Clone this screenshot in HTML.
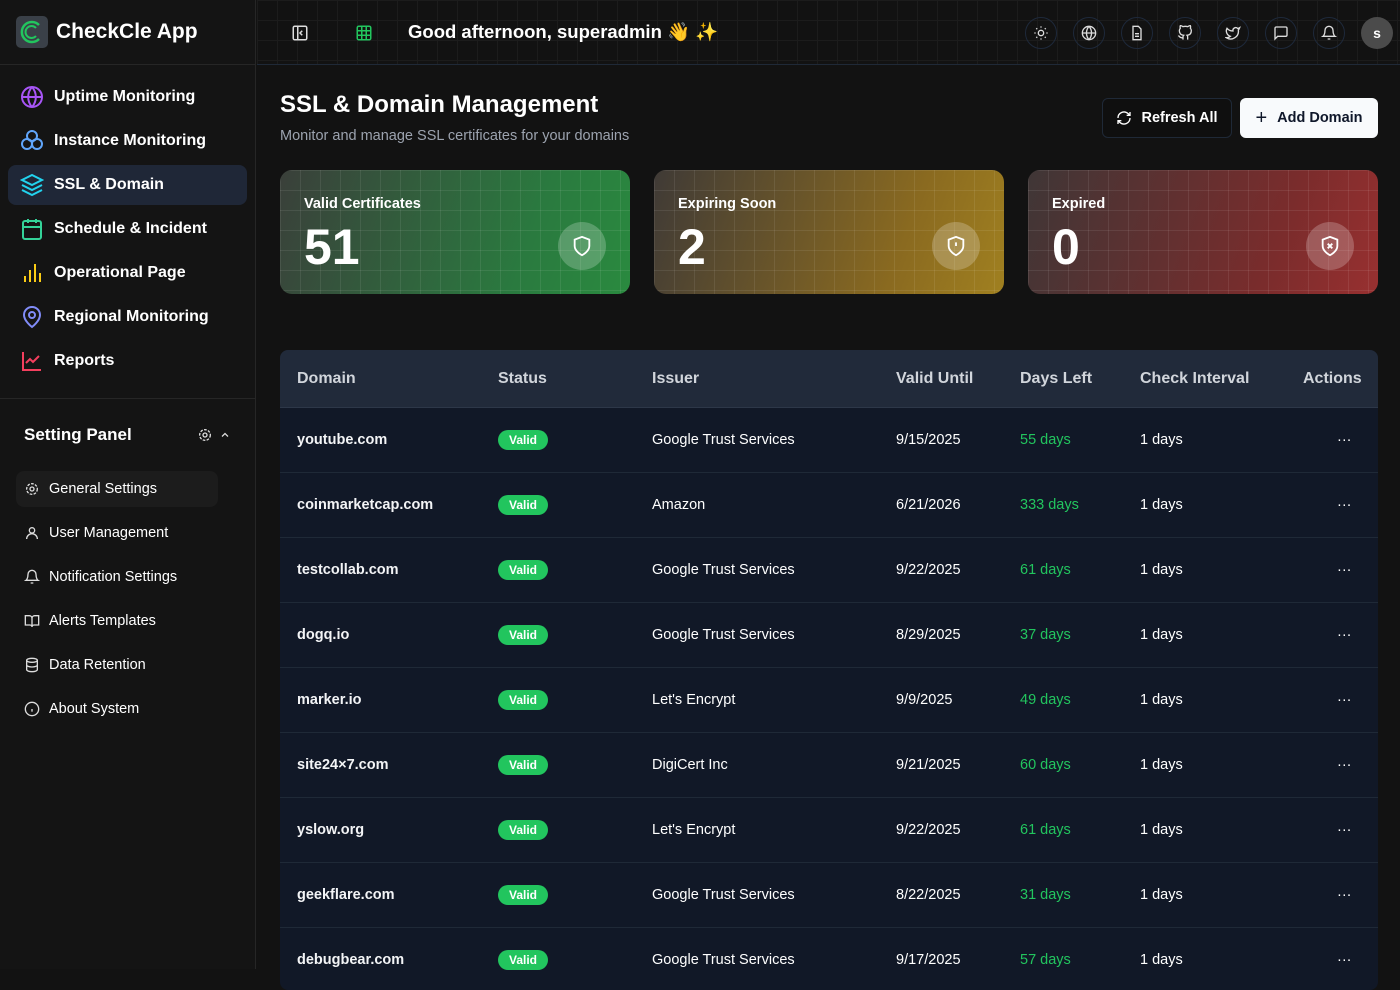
<!DOCTYPE html>
<html><head><meta charset="utf-8"><style>
*{box-sizing:border-box;margin:0;padding:0}
body{width:1400px;height:969px;overflow:hidden;background:#121212;font-family:"Liberation Sans",sans-serif;color:#fff;position:relative}
.sb{position:absolute;left:0;top:0;width:256px;height:969px;background:#141414;border-right:1px solid #262626}
.logo{height:65px;border-bottom:1px solid #262626;display:flex;align-items:center;padding-left:16px}
.logo .ic{width:32px;height:32px;background:#3a4048;border-radius:5px;display:flex;align-items:center;justify-content:center}
.logo span{font-size:21px;font-weight:bold;margin-left:8px}
.nav{padding:12px 8px 13px}
.ni{height:40px;display:flex;align-items:center;padding-left:12px;margin-bottom:4px;border-radius:8px;font-size:16px;font-weight:bold}
.ni svg{margin-right:10px}
.ni.act{background:#1f2737}
.sep{border-top:1px solid #262626}
.sp{display:flex;align-items:center;padding:0 24px;height:72px;font-size:17px;font-weight:bold}
.si{height:36px;display:flex;align-items:center;padding-left:8px;margin:0 37px 8px 16px;border-radius:8px;font-size:14.5px}
.si svg{margin-right:9px}
.si.act{background:#1c1c1c}
.hdr{position:absolute;left:257px;top:0;right:0;height:65px;border-bottom:1px solid #1f2937;background-color:#121212;background-image:linear-gradient(#1c1c1c 1px,transparent 1px),linear-gradient(90deg,#1c1c1c 1px,transparent 1px);background-size:20px 20px}
.rb{position:absolute;top:17px;width:32px;height:32px;border-radius:50%;border:1px solid #1e293b;display:flex;align-items:center;justify-content:center}
h1{position:absolute;left:280px;top:91px;font-size:24px;font-weight:bold}
.sub{position:absolute;left:280px;top:128px;font-size:14.5px;color:#9ca3af}
.btn{position:absolute;top:98px;height:40px;border-radius:6px;display:flex;align-items:center;justify-content:center;font-size:14.5px;font-weight:bold}
.card{position:absolute;top:170px;width:350px;height:124px;border-radius:12px;overflow:hidden}
.card .g{position:absolute;inset:0;background-image:linear-gradient(rgba(255,255,255,.08) 1px,transparent 1px),linear-gradient(90deg,rgba(255,255,255,.08) 1px,transparent 1px);background-size:20px 20px}
.card .t{position:absolute;left:24px;top:26px;font-size:14.5px;font-weight:bold}
.card .n{position:absolute;left:24px;top:48px;font-size:50px;font-weight:bold}
.card .c{position:absolute;left:278px;top:52px;width:48px;height:48px;border-radius:50%;background:rgba(255,255,255,.22);display:flex;align-items:center;justify-content:center}
.tbl{position:absolute;left:280px;top:350px;width:1098px;height:640px;border-radius:8px;overflow:hidden;background:#111827}
.th{height:58px;background:#212a3a;border-bottom:1px solid #2d3748;position:relative;font-size:16px;font-weight:bold;color:#d1d5db}
.tr{height:65px;border-bottom:1px solid #1f2937;position:relative;font-size:14.5px}
.th div,.tr div{position:absolute;top:50%;transform:translateY(-50%)}
.tr div:first-child{font-weight:bold;color:#f3f4f6}
.badge{background:#22c55e;color:#fff;font-size:12px;font-weight:bold;padding:3px 11px;border-radius:11px}
.dl{color:#22c55e}
</style></head><body>
<div class="sb">
 <div class="logo"><div class="ic"><svg width="26" height="26" viewBox="0 0 26 26"><path d="M20 6A10 10 0 1 0 20 20" fill="none" stroke="#22c55e" stroke-width="2.5"/><path d="M17 9A6 6 0 1 0 17 17" fill="none" stroke="#22c55e" stroke-width="2"/></svg></div><span>CheckCle App</span></div>
 <div class="nav">
  <div class="ni"><svg width="24" height="24" viewBox="0 0 24 24" fill="none" stroke="#a855f7" stroke-width="2"><circle cx="12" cy="12" r="10"/><path d="M2 12h20M12 2a15 15 0 0 1 0 20M12 2a15 15 0 0 0 0 20"/></svg>Uptime Monitoring</div>
  <div class="ni"><svg width="24" height="24" viewBox="0 0 24 24" fill="none" stroke="#60a5fa" stroke-width="2"><circle cx="12" cy="7" r="5"/><circle cx="7" cy="15" r="5"/><circle cx="17" cy="15" r="5"/></svg>Instance Monitoring</div>
  <div class="ni act"><svg width="24" height="24" viewBox="0 0 24 24" fill="none" stroke="#22d3ee" stroke-width="2"><path d="M12 2 2 7l10 5 10-5z"/><path d="m2 12 10 5 10-5M2 17l10 5 10-5"/></svg>SSL &amp; Domain</div>
  <div class="ni"><svg width="24" height="24" viewBox="0 0 24 24" fill="none" stroke="#34d399" stroke-width="2"><rect x="3" y="4" width="18" height="18" rx="2"/><path d="M16 2v4M8 2v4M3 10h18"/></svg>Schedule &amp; Incident</div>
  <div class="ni"><svg width="24" height="24" viewBox="0 0 24 24" fill="none" stroke="#facc15" stroke-width="2"><path d="M5 21v-6M10 21V9M15 21V3M20 21v-9"/></svg>Operational Page</div>
  <div class="ni"><svg width="24" height="24" viewBox="0 0 24 24" fill="none" stroke="#818cf8" stroke-width="2"><path d="M20 10c0 6-8 12-8 12s-8-6-8-12a8 8 0 0 1 16 0z"/><circle cx="12" cy="10" r="3"/></svg>Regional Monitoring</div>
  <div class="ni"><svg width="24" height="24" viewBox="0 0 24 24" fill="none" stroke="#f43f5e" stroke-width="2"><path d="M3 3v18h18"/><path d="m6 14 4-4 3 3 6-6"/></svg>Reports</div>
 </div>
 <div class="sep"></div>
 <div class="sp"><span style="flex:1">Setting Panel</span><svg width="16" height="16" viewBox="0 0 24 24" fill="none" stroke="#ddd" stroke-width="2"><circle cx="12" cy="12" r="3"/><circle cx="12" cy="12" r="8" stroke-dasharray="4 2"/></svg><svg style="margin-left:6px" width="12" height="12" viewBox="0 0 24 24" fill="none" stroke="#ddd" stroke-width="2.5"><path d="m6 15 6-6 6 6"/></svg></div>
 <div class="si act"><svg width="16" height="16" viewBox="0 0 24 24" fill="none" stroke="#ddd" stroke-width="2"><circle cx="12" cy="12" r="3"/><circle cx="12" cy="12" r="8" stroke-dasharray="4 2"/></svg>General Settings</div>
 <div class="si"><svg width="16" height="16" viewBox="0 0 24 24" fill="none" stroke="#ddd" stroke-width="2"><circle cx="12" cy="8" r="4"/><path d="M4 21a8 8 0 0 1 16 0"/></svg>User Management</div>
 <div class="si"><svg width="16" height="16" viewBox="0 0 24 24" fill="none" stroke="#ddd" stroke-width="2"><path d="M6 8a6 6 0 0 1 12 0c0 7 3 9 3 9H3s3-2 3-9M10 21h4"/></svg>Notification Settings</div>
 <div class="si"><svg width="16" height="16" viewBox="0 0 24 24" fill="none" stroke="#ddd" stroke-width="2"><path d="M2 4h6a4 4 0 0 1 4 4v13a3 3 0 0 0-3-3H2zM22 4h-6a4 4 0 0 0-4 4v13a3 3 0 0 1 3-3h7z"/></svg>Alerts Templates</div>
 <div class="si"><svg width="16" height="16" viewBox="0 0 24 24" fill="none" stroke="#ddd" stroke-width="2"><ellipse cx="12" cy="5" rx="8" ry="3"/><path d="M4 5v14c0 1.7 3.6 3 8 3s8-1.3 8-3V5M4 12c0 1.7 3.6 3 8 3s8-1.3 8-3"/></svg>Data Retention</div>
 <div class="si"><svg width="16" height="16" viewBox="0 0 24 24" fill="none" stroke="#ddd" stroke-width="2"><circle cx="12" cy="12" r="10"/><path d="M12 16v-4M12 8h0"/></svg>About System</div>
</div>
<div class="hdr">
 <svg style="position:absolute;left:34px;top:24px" width="18" height="18" viewBox="0 0 24 24" fill="none" stroke="#ddd" stroke-width="2"><rect x="3" y="3" width="18" height="18" rx="2"/><path d="M9 3v18M15 9l-3 3 3 3"/></svg>
 <svg style="position:absolute;left:98px;top:24px" width="18" height="18" viewBox="0 0 24 24" fill="none" stroke="#22c55e" stroke-width="2"><rect x="3" y="3" width="18" height="18" rx="2"/><path d="M3 9h18M3 15h18M9 3v18M15 3v18"/></svg>
 <div style="position:absolute;left:151px;top:21px;font-size:18.5px;font-weight:bold">Good afternoon, superadmin 👋 ✨</div>
 <div class="rb" style="left:768px"><svg width="16" height="16" viewBox="0 0 24 24" fill="none" stroke="#ddd" stroke-width="2"><circle cx="12" cy="12" r="4"/><path d="M12 2v2M12 20v2M4.9 4.9l1.4 1.4M17.7 17.7l1.4 1.4M2 12h2M20 12h2M4.9 19.1l1.4-1.4M17.7 6.3l1.4-1.4"/></svg></div>
 <div class="rb" style="left:816px"><svg width="16" height="16" viewBox="0 0 24 24" fill="none" stroke="#ddd" stroke-width="2"><circle cx="12" cy="12" r="10"/><path d="M2 12h20M12 2a15 15 0 0 1 0 20M12 2a15 15 0 0 0 0 20"/></svg></div>
 <div class="rb" style="left:864px"><svg width="16" height="16" viewBox="0 0 24 24" fill="none" stroke="#ddd" stroke-width="2"><path d="M14 2H6v20h12V6z"/><path d="M9 13h6M9 17h6"/></svg></div>
 <div class="rb" style="left:912px"><svg width="16" height="16" viewBox="0 0 24 24" fill="none" stroke="#ddd" stroke-width="2"><path d="M9 19c-5 1.5-5-2.5-7-3m14 6v-3.9a3.4 3.4 0 0 0-1-2.6c3.1-.3 6.5-1.5 6.5-7A5.4 5.4 0 0 0 20 4.8 5 5 0 0 0 20 1s-1.2-.3-4 1.5a13.4 13.4 0 0 0-7 0C6.2.7 5 1 5 1a5 5 0 0 0 0 3.8A5.4 5.4 0 0 0 3.5 8.5c0 5.4 3.4 6.6 6.5 7a3.4 3.4 0 0 0-1 2.6V22"/></svg></div>
 <div class="rb" style="left:960px"><svg width="16" height="16" viewBox="0 0 24 24" fill="none" stroke="#ddd" stroke-width="2"><path d="M22 4s-.7 2.1-2 3.4c1.6 10-9.4 17.3-18 11.6 2.2.1 4.4-.6 6-2C3 15.5.5 9.6 3 5c2.2 2.6 5.6 4.1 9 4-.9-4.2 4-6.6 7-3.8 1.1 0 3-1.2 3-1.2z"/></svg></div>
 <div class="rb" style="left:1008px"><svg width="16" height="16" viewBox="0 0 24 24" fill="none" stroke="#ddd" stroke-width="2"><path d="M21 15a2 2 0 0 1-2 2H7l-4 4V5a2 2 0 0 1 2-2h14a2 2 0 0 1 2 2z"/></svg></div>
 <div class="rb" style="left:1056px"><svg width="16" height="16" viewBox="0 0 24 24" fill="none" stroke="#ddd" stroke-width="2"><path d="M6 8a6 6 0 0 1 12 0c0 7 3 9 3 9H3s3-2 3-9M10 21h4"/></svg></div>
 <div class="rb" style="left:1104px;background:#4b4b4b;border:none;font-size:14px;font-weight:bold">s</div>
</div>
<h1>SSL &amp; Domain Management</h1>
<div class="sub">Monitor and manage SSL certificates for your domains</div>
<div class="btn" style="left:1102px;width:130px;border:1px solid #1f2937;background:#0f0f0f"><svg width="16" height="16" viewBox="0 0 24 24" fill="none" stroke="#fff" stroke-width="2" style="margin-right:9px"><path d="M3 12a9 9 0 0 1 15-6.7L21 8M21 3v5h-5M21 12a9 9 0 0 1-15 6.7L3 16M8 16H3v5"/></svg>Refresh All</div>
<div class="btn" style="left:1240px;width:138px;background:#f8fafc;color:#0f172a"><span style="font-size:20px;font-weight:normal;margin-right:10px">+</span>Add Domain</div>
<div class="card" style="left:280px;background:linear-gradient(110deg,#3a3f3a,#2a7a3f 70%,#2a8a3f)"><div class="g"></div><div class="t">Valid Certificates</div><div class="n">51</div><div class="c"><svg width="22" height="22" viewBox="0 0 24 24" fill="none" stroke="#fff" stroke-width="2"><path d="M12 22s8-4 8-10V5l-8-3-8 3v7c0 6 8 10 8 10z"/></svg></div></div>
<div class="card" style="left:654px;background:linear-gradient(110deg,#3f3a36,#8a6a20 70%,#a08020)"><div class="g"></div><div class="t">Expiring Soon</div><div class="n">2</div><div class="c"><svg width="22" height="22" viewBox="0 0 24 24" fill="none" stroke="#fff" stroke-width="2"><path d="M12 22s8-4 8-10V5l-8-3-8 3v7c0 6 8 10 8 10z"/><path d="M12 8v4M12 16h0"/></svg></div></div>
<div class="card" style="left:1028px;background:linear-gradient(110deg,#3f3636,#7a2c2c 70%,#983030)"><div class="g"></div><div class="t">Expired</div><div class="n">0</div><div class="c"><svg width="22" height="22" viewBox="0 0 24 24" fill="none" stroke="#fff" stroke-width="2"><path d="M12 22s8-4 8-10V5l-8-3-8 3v7c0 6 8 10 8 10z"/><path d="m9.5 9.5 5 5M14.5 9.5l-5 5"/></svg></div></div>
<div class="tbl">
 <div class="th"><div style="left:17px">Domain</div><div style="left:218px">Status</div><div style="left:372px">Issuer</div><div style="left:616px">Valid Until</div><div style="left:740px">Days Left</div><div style="left:860px">Check Interval</div><div style="left:1023px">Actions</div></div>
 <div class="tr"><div style="left:17px">youtube.com</div><div style="left:218px" class="badge">Valid</div><div style="left:372px">Google Trust Services</div><div style="left:616px">9/15/2025</div><div style="left:740px" class="dl">55 days</div><div style="left:860px">1 days</div><div style="left:1057px">···</div></div>
 <div class="tr"><div style="left:17px">coinmarketcap.com</div><div style="left:218px" class="badge">Valid</div><div style="left:372px">Amazon</div><div style="left:616px">6/21/2026</div><div style="left:740px" class="dl">333 days</div><div style="left:860px">1 days</div><div style="left:1057px">···</div></div>
 <div class="tr"><div style="left:17px">testcollab.com</div><div style="left:218px" class="badge">Valid</div><div style="left:372px">Google Trust Services</div><div style="left:616px">9/22/2025</div><div style="left:740px" class="dl">61 days</div><div style="left:860px">1 days</div><div style="left:1057px">···</div></div>
 <div class="tr"><div style="left:17px">dogq.io</div><div style="left:218px" class="badge">Valid</div><div style="left:372px">Google Trust Services</div><div style="left:616px">8/29/2025</div><div style="left:740px" class="dl">37 days</div><div style="left:860px">1 days</div><div style="left:1057px">···</div></div>
 <div class="tr"><div style="left:17px">marker.io</div><div style="left:218px" class="badge">Valid</div><div style="left:372px">Let's Encrypt</div><div style="left:616px">9/9/2025</div><div style="left:740px" class="dl">49 days</div><div style="left:860px">1 days</div><div style="left:1057px">···</div></div>
 <div class="tr"><div style="left:17px">site24×7.com</div><div style="left:218px" class="badge">Valid</div><div style="left:372px">DigiCert Inc</div><div style="left:616px">9/21/2025</div><div style="left:740px" class="dl">60 days</div><div style="left:860px">1 days</div><div style="left:1057px">···</div></div>
 <div class="tr"><div style="left:17px">yslow.org</div><div style="left:218px" class="badge">Valid</div><div style="left:372px">Let's Encrypt</div><div style="left:616px">9/22/2025</div><div style="left:740px" class="dl">61 days</div><div style="left:860px">1 days</div><div style="left:1057px">···</div></div>
 <div class="tr"><div style="left:17px">geekflare.com</div><div style="left:218px" class="badge">Valid</div><div style="left:372px">Google Trust Services</div><div style="left:616px">8/22/2025</div><div style="left:740px" class="dl">31 days</div><div style="left:860px">1 days</div><div style="left:1057px">···</div></div>
 <div class="tr"><div style="left:17px">debugbear.com</div><div style="left:218px" class="badge">Valid</div><div style="left:372px">Google Trust Services</div><div style="left:616px">9/17/2025</div><div style="left:740px" class="dl">57 days</div><div style="left:860px">1 days</div><div style="left:1057px">···</div></div>
</div>
</body></html>
